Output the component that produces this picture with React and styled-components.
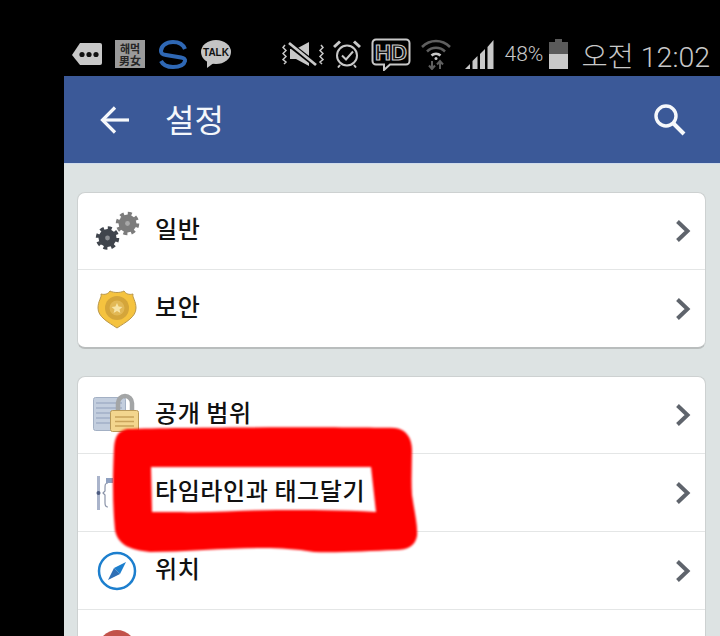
import React from 'react';
import styled, { createGlobalStyle } from 'styled-components';

const GlobalStyle = createGlobalStyle`
  html, body {
    margin: 0;
    padding: 0;
    background: #000;
  }
  body {
    font-family: "Noto Sans CJK KR", "Noto Sans", sans-serif;
  }
`;

const Page = styled.div`
  position: relative;
  display: flex;
  width: 720px;
  height: 636px;
  overflow: hidden;
  background: #000;
`;

const Gutter = styled.div`
  flex: 0 0 64px;
`;

const Phone = styled.div`
  flex: 1;
  display: flex;
  flex-direction: column;
  min-width: 0;
`;

const StatusBar = styled.div`
  flex: 0 0 44px;
  display: flex;
  align-items: center;
  justify-content: space-between;
  padding: 32px 10px 0 8px;
  color: #c8c8c8;
`;

const StatusGroup = styled.div`
  display: flex;
  align-items: center;
  gap: ${p => p.$gap}px;
`;

const StatusItem = styled.div`
  display: flex;
  margin-left: ${p => p.$shift || 0}px;
`;

const NoticeBox = styled.div`
  width: 30px;
  height: 28px;
  display: flex;
  align-items: center;
  justify-content: center;
  background: #9a9a9a;
  color: #262626;
  font-size: 11px;
  font-weight: 700;
  line-height: 12px;
  text-align: center;
  word-break: break-all;
`;

const Percent = styled.span`
  font-family: "Roboto", sans-serif;
  font-size: 21px;
  font-weight: 300;
`;

const Clock = styled.span`
  font-family: "Roboto", "Noto Sans CJK KR", sans-serif;
  font-size: 28.5px;
  font-weight: 300;
  white-space: nowrap;
`;

const AppBar = styled.header`
  flex: 0 0 87px;
  display: flex;
  align-items: center;
  padding: 0 34px 0 36px;
  background: #3b5998;
  color: #f4f7fb;
`;

const Title = styled.h1`
  flex: 1;
  margin: -3px 0 0 35px;
  font-size: 32px;
  font-weight: 400;
  line-height: 1;
`;

const Content = styled.main`
  flex: 1;
  display: flex;
  flex-direction: column;
  gap: 27px;
  padding: 28px 14px 0 13px;
  background: #dde3e3;
  border-top: 1px solid #cfdcec;
  min-height: 0;
`;

const Card = styled.section`
  flex: none;
  background: #fff;
  border-radius: 8px;
  border: 1px solid #cdd1d1;
  border-bottom: 2px solid #b9bdbd;
`;

const Row = styled.div`
  display: flex;
  align-items: center;
  box-sizing: border-box;
  height: ${p => (p.$first ? 76 : 78)}px;
  padding: 0 14px 0 15px;
  border-top: ${p => (p.$first ? 'none' : '1px solid #e4e6e6')};
`;

const IconSlot = styled.div`
  flex: 0 0 47px;
  height: 46px;
  margin-right: 15px;
  display: flex;
  align-items: center;
  justify-content: center;
`;

const Label = styled.span`
  flex: 1;
  position: relative;
  top: -3px;
  font-size: 24px;
  font-weight: 500;
  letter-spacing: 0.6px;
  color: #111;
  line-height: 1;
`;

const Marker = styled.svg`
  position: absolute;
  left: 0;
  top: 0;
  filter: blur(1.2px);
  pointer-events: none;
`;

const Chevron = () => (
  <svg width="16" height="24" viewBox="0 0 16 24">
    <path d="M2.5 2.5 L12.5 12 L2.5 21.5" fill="none" stroke="#5f646c" strokeWidth="4" />
  </svg>
);

const Dots = () => (
  <svg width="30" height="24" viewBox="0 0 30 24">
    <path d="M8 1h20a2 2 0 0 1 2 2v18a2 2 0 0 1-2 2H8L0 13z" fill="#c8c8c8" />
    <circle cx="10" cy="12.5" r="2.6" fill="#111" />
    <circle cx="17" cy="12.5" r="2.6" fill="#111" />
    <circle cx="24" cy="12.5" r="2.6" fill="#111" />
  </svg>
);

const SLogo = () => (
  <svg width="30" height="30" viewBox="0 0 30 30">
    <path d="M27 10C25 5 20 3 15 3C8 3 3 7 3 12C3 15 5 15.500 8 16L23 18.500C26 19 27.500 20 27 22C26 26 21 28 15 28C9 28 5 26 3 22" fill="none" stroke="#2f68b5" strokeWidth="4" />
  </svg>
);

const TalkBubble = () => (
  <svg width="30" height="28" viewBox="0 0 30 28">
    <ellipse cx="15" cy="12" rx="15" ry="12" fill="#c4c4c4" />
    <path d="M6 19l0 9 8-6z" fill="#c4c4c4" />
    <text x="15" y="15.500" textAnchor="middle" fontFamily="Liberation Sans" fontSize="10" fontWeight="700" fill="#111">TALK</text>
  </svg>
);

const MuteVibrate = () => (
  <svg width="42" height="26" viewBox="0 0 42 26">
    <path d="M3 4l-2 2.500 3 3-3 3 3 3-3 3 3 2.500-2 2M39 4l2 2.500-3 3 3 3-3 3 3 3-3 2.500 2 2" fill="none" stroke="#c8c8c8" strokeWidth="1.500" />
    <path d="M8 8h6l13-7v24l-13-7H8z" fill="#c8c8c8" />
    <path d="M6 2l28 22" stroke="#000" strokeWidth="5.500" />
    <path d="M7 2l27 22" stroke="#c8c8c8" strokeWidth="2.800" />
  </svg>
);

const Alarm = () => (
  <svg width="28" height="28" viewBox="0 0 28 28" fill="none" stroke="#c8c8c8">
    <circle cx="14" cy="15.500" r="10" strokeWidth="2" />
    <path d="M9 15.500l4 4 7-8" strokeWidth="2" />
    <path d="M1 7l6-5.500M27 7l-6-5.500" strokeWidth="3" />
    <path d="M7 25l-2 2.500M21 25l2 2.500" strokeWidth="2" />
  </svg>
);

const HdBubble = () => (
  <svg width="40" height="33" viewBox="0 0 40 33">
    <path d="M5 1.500h30a3.500 3.500 0 0 1 3.500 3.500v18a3.500 3.500 0 0 1-3.500 3.500H19l-6 5.500v-5.500H5a3.500 3.500 0 0 1-3.500-3.500V5a3.500 3.500 0 0 1 3.500-3.500z" fill="none" stroke="#c8c8c8" strokeWidth="2" />
    <text x="20" y="21.500" textAnchor="middle" fontFamily="Liberation Sans" fontSize="22" fontWeight="700" fill="#111" stroke="#c8c8c8" strokeWidth="1.200">HD</text>
  </svg>
);

const Wifi = () => (
  <svg width="30" height="32" viewBox="0 0 30 32" fill="none" stroke="#5f5f5f" strokeWidth="2.500">
    <path d="M1 9C9 1 21 1 29 9" />
    <path d="M6 13.500C11 8.500 19 8.500 24 13.500" />
    <path d="M10.500 17.500C13 15 17 15 19.500 17.500" stroke="#c8c8c8" />
    <circle cx="15" cy="20.500" r="1.500" fill="#c8c8c8" stroke="none" />
    <path d="M11 23v8M8 27.500l3 3.500 3-3.500" strokeWidth="2" />
    <path d="M19 31v-8M16 26.500l3-3.500 3 3.500" strokeWidth="2" />
  </svg>
);

const Signal = () => (
  <svg width="30" height="30" viewBox="0 0 30 30" fill="#c8c8c8">
    <path d="M0 30l5-5v5z" />
    <path d="M7.500 30v-8l5-5v13z" />
    <path d="M15 30V15l5-5v20z" />
    <path d="M22.500 30V8l6-7v29z" />
  </svg>
);

const Battery = () => (
  <svg width="19" height="30" viewBox="0 0 19 30">
    <path d="M6 0h7v3h6v27H0V3h6z" fill="#5a5a5a" />
    <rect x="0" y="15" width="19" height="15" fill="#c8c8c8" />
  </svg>
);

const BackArrow = () => (
  <svg width="30" height="28" viewBox="0 0 30 28" fill="none" stroke="#f6f8fb" strokeWidth="3.200">
    <path d="M29 14H3" />
    <path d="M15 1.500L2.500 14L15 26.500" />
  </svg>
);

const SearchIcon = () => (
  <svg width="33" height="33" viewBox="0 0 33 33" fill="none" stroke="#f6f8fb">
    <circle cx="13" cy="13" r="10" strokeWidth="3.400" />
    <path d="M20 20l11 11" strokeWidth="4" />
  </svg>
);

const Gears = () => (
  <svg width="47" height="40" viewBox="0 0 47 40">
    <circle cx="34.500" cy="12.500" r="9" fill="#7c7c7c" />
    <circle cx="34.500" cy="12.500" r="10" fill="none" stroke="#7c7c7c" strokeWidth="3.500" strokeDasharray="4 3.850" />
    <circle cx="34.500" cy="12.500" r="2.400" fill="#a8a8a8" />
    <circle cx="14.500" cy="27" r="9" fill="#3f444c" />
    <circle cx="14.500" cy="27" r="10" fill="none" stroke="#3f444c" strokeWidth="3.500" strokeDasharray="4 3.850" />
    <circle cx="14.500" cy="27" r="2.400" fill="#8a8d92" />
  </svg>
);

const Shield = () => (
  <svg width="40" height="40" viewBox="0 0 40 40">
    <path d="M4 5C8 6 11 5 13 2C17 4 23 4 27 2C29 5 32 6 36 5C35 8 39 12 39 19C39 28 29 33 20 39C11 33 1 28 1 19C1 12 5 8 4 5z" fill="#f5c33f" stroke="#b9974a" strokeWidth="1" />
    <circle cx="20" cy="19" r="12" fill="#d4a53a" />
    <circle cx="20" cy="19" r="7.500" fill="#e2b855" />
    <path d="M20 14l1.600 3.500 3.800.4-2.900 2.500.9 3.700-3.400-2-3.400 2 .9-3.700-2.900-2.500 3.800-.4z" fill="#f7e3a4" />
  </svg>
);

const LockDoc = () => (
  <svg width="47" height="46" viewBox="0 0 47 46">
    <rect x="0.500" y="5.500" width="32" height="33" rx="2" fill="#c3cede" stroke="#a3b0c4" />
    <path d="M3 11h26M3 16h26M3 21h26M3 26h26M3 31h26" stroke="#aab7cd" strokeWidth="2" />
    <path d="M25 20v-9a7 7 0 0 1 14 0v9" fill="none" stroke="#a3a5a6" strokeWidth="4.500" />
    <rect x="17.500" y="18.500" width="28" height="21" rx="2" fill="#f3d68e" stroke="#b99a58" />
    <path d="M22 25h19M22 29.500h19M22 34h19" stroke="#c9a45b" strokeWidth="1.500" />
  </svg>
);

const TimelineIcon = () => (
  <svg width="47" height="40" viewBox="0 0 47 40">
    <rect x="4" y="3" width="3" height="34" fill="#aab4cb" />
    <circle cx="5.500" cy="20" r="2" fill="#4c5b80" />
    <path d="M15 10C12 10 12 12 12 15V18L10 20L12 22V30C12 33 13 34 15 34" fill="none" stroke="#8a93a8" strokeWidth="1.200" />
    <rect x="13" y="5" width="7" height="5" fill="#8fa0c0" />
  </svg>
);

const Compass = () => (
  <svg width="40" height="40" viewBox="0 0 40 40">
    <circle cx="20" cy="20" r="18" fill="#fff" stroke="#1d7fce" strokeWidth="2.500" />
    <path d="M29 11L23 23L17 17z" fill="#1d7fce" />
    <path d="M11 29L17 17L23 23z" fill="#2f6fb5" />
  </svg>
);

const RedPin = () => (
  <svg width="40" height="40" viewBox="0 0 40 40">
    <circle cx="20" cy="20" r="19" fill="#c2524a" />
  </svg>
);

const cards = [
  [
    { icon: <Gears />, label: '일반' },
    { icon: <Shield />, label: '보안' },
  ],
  [
    { icon: <LockDoc />, label: '공개 범위' },
    { icon: <TimelineIcon />, label: '타임라인과 태그달기' },
    { icon: <Compass />, label: '위치' },
    { icon: <RedPin />, label: '' },
  ],
];

export default function App() {
  return (
    <Page>
      <GlobalStyle />
      <Gutter />
      <Phone>
        <StatusBar>
          <StatusGroup $gap={13}>
            <Dots />
            <NoticeBox>해먹男女</NoticeBox>
            <SLogo />
            <TalkBubble />
          </StatusGroup>
          <StatusGroup $gap={10}>
            <MuteVibrate />
            <StatusItem $shift={-1}><Alarm /></StatusItem>
            <HdBubble />
            <Wifi />
            <StatusItem $shift={4}><Signal /></StatusItem>
            <Percent>48%</Percent>
            <StatusItem $shift={-4}><Battery /></StatusItem>
            <StatusItem $shift={3}><Clock>오전 12:02</Clock></StatusItem>
          </StatusGroup>
        </StatusBar>
        <AppBar>
          <BackArrow />
          <Title>설정</Title>
          <SearchIcon />
        </AppBar>
        <Content>
          {cards.map((rows, i) => (
            <Card key={i}>
              {rows.map((row, j) => (
                <Row key={j} $first={j === 0}>
                  <IconSlot>{row.icon}</IconSlot>
                  <Label>{row.label}</Label>
                  <Chevron />
                </Row>
              ))}
            </Card>
          ))}
        </Content>
      </Phone>
      <Marker width="720" height="636" viewBox="0 0 720 636">
        <path
          fillRule="evenodd"
          fill="#fe0000"
          d="M127 429C180 427 340 427 395 428C406 429 412 438 412 450C412 465 411 480 412 495C414 510 418 525 417 536C415 546 408 550 395 550C370 551 335 553 314 552C295 549 280 548 264 548C225 548 185 552 150 552C130 550 118 545 115 530C112 500 113 470 114 448C115 436 118 431 127 429Z M151 467L371 467L376 512C340 510 310 510 277 510C245 510 210 513 181 512L152 512Z"
        />
      </Marker>
    </Page>
  );
}
